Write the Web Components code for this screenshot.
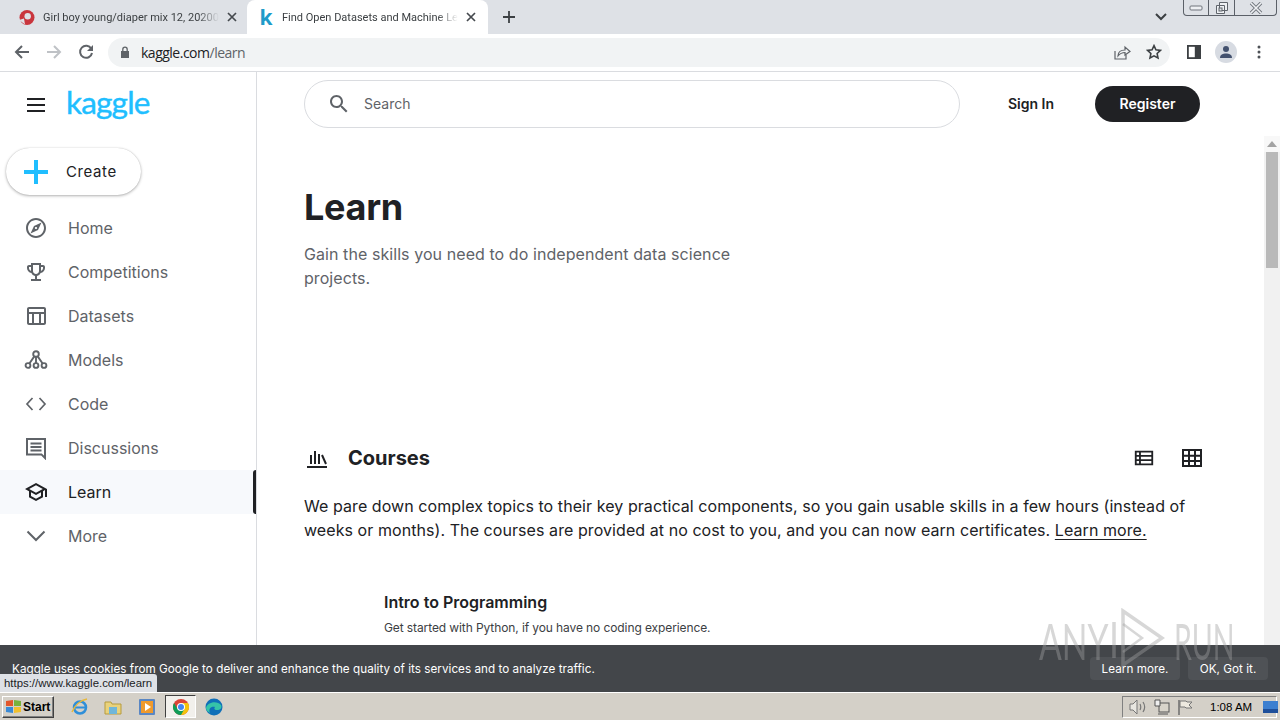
<!DOCTYPE html>
<html lang="en">
<head>
<meta charset="utf-8">
<title>Find Open Datasets and Machine Learning Projects | Kaggle</title>
<style>
    html, body { margin: 0; height: 100%; overflow: hidden; background: #fff; }
    body { display: flex; flex-direction: column; width: 1280px; height: 720px; position: relative; font-family: Inter, sans-serif; }
</style>
</head>
<body>
    <tab-strip></tab-strip>
    <address-bar></address-bar>
    <page-frame>
        <side-nav slot="nav">
            <nav-item label="Home" icon="home"></nav-item>
            <nav-item label="Competitions" icon="trophy"></nav-item>
            <nav-item label="Datasets" icon="table"></nav-item>
            <nav-item label="Models" icon="models"></nav-item>
            <nav-item label="Code" icon="code"></nav-item>
            <nav-item label="Discussions" icon="chat"></nav-item>
            <nav-item label="Learn" icon="school" active></nav-item>
            <nav-item label="More" icon="more"></nav-item>
        </side-nav>
        <top-search slot="top"></top-search>
        <learn-content slot="content"></learn-content>
    </page-frame>
    <task-bar></task-bar>
    <cookie-bar></cookie-bar>
    <status-tip>https://www.kaggle.com/learn</status-tip>
    <run-mark></run-mark>

<script>
const ICONS = {
    home: `<path d="M12 2C6.48 2 2 6.48 2 12s4.48 10 10 10 10-4.48 10-10S17.52 2 12 2zm0 18c-4.41 0-8-3.59-8-8s3.59-8 8-8 8 3.59 8 8-3.59 8-8 8zm-5.5-2.5l7.51-3.49L17.5 6.5 9.99 9.99 6.5 17.5zm5.5-6.6c.61 0 1.1.49 1.1 1.1s-.49 1.1-1.1 1.1-1.1-.49-1.1-1.1.49-1.1 1.1-1.1z"/>`,
    trophy: `<path d="M19 5h-2V3H7v2H5c-1.1 0-2 .9-2 2v1c0 2.55 1.92 4.63 4.39 4.94.63 1.5 1.98 2.63 3.61 2.96V19H7v2h10v-2h-4v-3.1c1.63-.33 2.98-1.46 3.61-2.96C19.08 12.63 21 10.55 21 8V7c0-1.1-.9-2-2-2zM5 8V7h2v3.82C5.84 10.4 5 9.3 5 8zm7 6c-1.65 0-3-1.35-3-3V5h6v6c0 1.65-1.35 3-3 3zm7-6c0 1.3-.84 2.4-2 2.82V7h2v1z"/>`,
    table: `<path d="M20 3H5C3.9 3 3 3.9 3 5v14c0 1.1.9 2 2 2h15c1.1 0 2-.9 2-2V5c0-1.1-.9-2-2-2zm0 2v3H5V5h15zm-5 14h-5v-9h5v9zM5 10h3v9H5v-9zm12 9v-9h3v9h-3z"/>`,
    models: `<g fill="none" stroke="currentColor" stroke-width="1.9"><circle cx="12" cy="6" r="2.8"/><circle cx="4" cy="17.500" r="2.400"/><circle cx="12" cy="17.500" r="2.400"/><circle cx="20" cy="17.500" r="2.400"/><path d="M12 9v6M10.300 8.400L5.400 15.500M13.700 8.400l4.900 7.100"/></g>`,
    code: `<path fill="none" stroke="currentColor" stroke-width="1.700" d="M8.500 6L3 12l5.500 6M15.500 6L21 12l-5.500 6"/>`,
    chat: `<path fill="none" stroke="currentColor" stroke-width="2" d="M3 3h18v19l-3.600-3.600H3z"/><path fill="none" stroke="currentColor" stroke-width="2" d="M6.500 7.500h11M6.500 11h11M6.500 14.500h11"/>`,
    school: `<path d="M12 3L1 9l4 2.18v6L12 21l7-3.82v-6l2-1.09V17h2V9L12 3zm6.82 6L12 12.72 5.18 9 12 5.28 18.82 9zM17 15.99l-5 2.73-5-2.73v-3.72L12 15l5-2.73v3.72z"/>`,
    more: `<path fill="none" stroke="currentColor" stroke-width="2" d="M3.500 7.500L12 16l8.500-8.500"/>`,
    search: `<path d="M15.500 14h-.79l-.28-.27C15.41 12.59 16 11.11 16 9.500 16 5.91 13.09 3 9.500 3S3 5.91 3 9.500 5.91 16 9.500 16c1.61 0 3.09-.59 4.230-1.570l.27.28v.79l5 4.990L20.490 19l-4.990-5zm-6 0C7.010 14 5 11.990 5 9.500S7.010 5 9.500 5 14 7.010 14 9.500 11.990 14 9.500 14z"/>`,
    courses: `<path fill="none" stroke="currentColor" stroke-width="2" d="M3 21h20M7 18V9M11 18V5M15 18V8M18 9l4 9"/>`,
    list: `<path d="M2 4h20v16H2zm2 2v2.600h2.600V6zm4.600 0v2.600H20V6zM4 10.700v2.600h2.600v-2.600zm4.600 0v2.600H20v-2.600zM4 15.400V18h2.600v-2.600zm4.600 0V18H20v-2.600z" fill-rule="evenodd"/>`,
    grid: `<path d="M2 3h20v18H2zm2 2v3.700h4V5zm6 0v3.700h4V5zm6 0v3.700h4V5zM4 10.700v3.300h4v-3.300zm6 0v3.300h4v-3.300zm6 0v3.300h4v-3.300zM4 16v3h4v-3zm6 0v3h4v-3zm6 0v3h4v-3z" fill-rule="evenodd"/>`
};

function icon(name, size) {
    return `<svg width="${size}" height="${size}" viewBox="0 0 24 24" fill="currentColor" aria-hidden="true">${ICONS[name]}</svg>`;
}

// every element below only needs a shadow root with fixed markup
class Shadowed extends HTMLElement {
    connectedCallback() {
        if (this.shadowRoot) return;
        this.attachShadow({ mode: "open" });
        this.shadowRoot.innerHTML = this.render();
    }
}

class BrowserTab extends Shadowed {
    render() {
        return `<style>
            :host { display: flex; align-items: center; height: 34px; width: 241px; box-sizing: border-box;
                padding: 0 10px 0 13px; gap: 8px; font: 11px Roboto, sans-serif; color: #3c4043; }
            :host([active]) { background: #fff; border-radius: 8px 8px 0 0; padding: 0 12px 0 11px; }
            .fav { flex: none; width: 16px; height: 16px; display: flex; align-items: center; justify-content: center; }
            .title { flex: 1; min-width: 0; white-space: nowrap; overflow: hidden;
                -webkit-mask-image: linear-gradient(to right, #000 88%, transparent); mask-image: linear-gradient(to right, #000 88%, transparent); }
            svg { display: block; flex: none; }
        </style>
        <span class="fav"><slot name="fav"></slot></span>
        <span class="title"><slot></slot></span>
        <svg width="10" height="10" viewBox="0 0 10 10"><path d="M1 1l8 8M9 1l-8 8" stroke="#45494e" stroke-width="1.700"/></svg>`;
    }
}
customElements.define("browser-tab", BrowserTab);

class TabStrip extends Shadowed {
    render() {
        return `<style>
            :host { display: flex; flex: none; height: 34px; background: #dee1e6; position: relative; box-sizing: border-box; align-items: flex-end; }
            .tabs { display: flex; padding-left: 6px; align-items: flex-end; }
            .k { color: #1f9bc9; font: 700 21px "Noto Sans", sans-serif; line-height: 16px; }
            .plus { margin-left: 14px; height: 34px; display: flex; align-items: center; }
            .chev { position: absolute; left: 1155px; top: 12px; }
            .win { position: absolute; left: 1183px; top: 0; width: 94px; height: 16px; display: flex; box-sizing: border-box;
                border: 1px solid #5b6068; border-top: 0; border-radius: 0 0 4px 4px; }
            .win span { display: flex; align-items: center; justify-content: center; border-right: 1px solid #5b6068; }
            .win span:last-child { border-right: 0; flex: 1; }
        </style>
        <div class="tabs">
            <browser-tab>
                <svg slot="fav" width="17" height="17" viewBox="0 0 16 16"><circle cx="8" cy="8" r="7.500" fill="#c9353d"/><circle cx="8.700" cy="6.800" r="3.200" fill="#dee1e6"/><path d="M0 10.500l5-1.500 1 6z" fill="#dee1e6"/></svg>
                Girl boy young/diaper mix 12, 20200
            </browser-tab>
            <browser-tab active>
                <span slot="fav" class="k">k</span>
                Find Open Datasets and Machine Learning
            </browser-tab>
            <span class="plus"><svg width="14" height="14" viewBox="0 0 14 14"><path d="M7 1v12M1 7h12" stroke="#3c4043" stroke-width="1.800"/></svg></span>
        </div>
        <svg class="chev" width="12" height="10" viewBox="0 0 12 10"><path d="M1 2l5 5 5-5" fill="none" stroke="#3c4043" stroke-width="2"/></svg>
        <div class="win">
            <span style="width:24px"><svg width="14" height="6" viewBox="0 0 14 6"><rect x="1" y="1" width="12" height="4" rx="1" fill="#eef0f3" stroke="#70757c"/></svg></span>
            <span style="width:25px"><svg width="14" height="14" viewBox="0 0 14 14"><path d="M4.500 1.500h8v8h-8zM1.500 4.500h8v8h-8z" fill="#eef0f3" stroke="#5f646b"/><rect x="4" y="7" width="3" height="3" fill="#dee1e6" stroke="#5f646b"/></svg></span>
            <span><svg width="14" height="12" viewBox="0 0 14 12"><path d="M2 1l10 10M12 1L2 11" stroke="#70757c" stroke-width="3.400"/><path d="M2 1l10 10M12 1L2 11" stroke="#eef0f3" stroke-width="1.600"/></svg></span>
        </div>`;
    }
}
customElements.define("tab-strip", TabStrip);

class AddressBar extends Shadowed {
    render() {
        return `<style>
            :host { display: flex; flex: none; align-items: center; height: 38px; box-sizing: border-box; background: #fff;
                border-bottom: 1px solid #dadce0; padding: 0 19px 1px 14px; }
            .nav { display: flex; gap: 16px; width: 94px; flex: none; align-items: center; }
            .url { flex: 1; height: 29px; background: #f1f3f4; border-radius: 15px; display: flex; align-items: center; padding: 0 8px 0 12px;
                font: 14px "Open Sans", sans-serif; letter-spacing: -.5px; color: #202124; gap: 11px; }
            .url b { font-weight: 400; color: #5f6368; }
            .grow { flex: 1; display: block; }
            .url svg { flex: none; }
            .actions { display: flex; align-items: center; margin-left: 15px; gap: 12px; flex: none; }
            .avatar { width: 22px; height: 22px; border-radius: 50%; background: #d7dbe2; display: flex; align-items: center; justify-content: center; }
        </style>
        <div class="nav">
            <svg width="16" height="16" viewBox="0 0 16 16"><path d="M15 8H2M8 2L2 8l6 6" fill="none" stroke="#5f6368" stroke-width="2"/></svg>
            <svg width="16" height="16" viewBox="0 0 16 16"><path d="M1 8h13M8 2l6 6-6 6" fill="none" stroke="#bfc2c6" stroke-width="2"/></svg>
            <svg width="16" height="16" viewBox="0 0 16 16"><path d="M13.300 4.800A6 6 0 1 0 14 9" fill="none" stroke="#5f6368" stroke-width="2"/><path d="M15 1v6H9z" fill="#5f6368"/></svg>
        </div>
        <div class="url">
            <svg width="10" height="12" viewBox="0 0 10 12"><path d="M1 5h8v7H1z" fill="#5f6368"/><path d="M2.800 5V3.400a2.200 2.200 0 0 1 4.400 0V5" fill="none" stroke="#5f6368" stroke-width="1.300"/></svg>
            <span>kaggle.com<b>/learn</b></span>
            <span class="grow"></span>
            <svg width="18" height="16" viewBox="0 0 18 16" style="margin-right:4px"><path d="M2 7v8h11v-4" fill="none" stroke="#5f6368" stroke-width="1.200"/><path d="M5 12c0-4 3-6 7-6V3l5 4.500L12 11V8.500C9 8.500 7 9.500 5 12z" fill="none" stroke="#5f6368" stroke-width="1.200"/></svg>
            <svg width="16" height="16" viewBox="0 0 24 24"><path d="M12 2.500l2.900 6.300 6.800.8-5 4.700 1.300 6.800-6-3.400-6 3.400 1.300-6.800-5-4.700 6.800-.8z" fill="none" stroke="#3c4043" stroke-width="2.400"/></svg>
        </div>
        <div class="actions">
            <svg width="14" height="14" viewBox="0 0 14 14" style="margin:0 2px 0 2px"><path d="M0 0h14v14H0z" fill="#3c4043"/><path d="M1.800 1.800h6v10.400h-6z" fill="#fff"/></svg>
            <span class="avatar"><svg width="14" height="14" viewBox="0 0 14 14"><circle cx="7" cy="4" r="3" fill="#43516e"/><path d="M1 13c0-3.500 3-4.500 6-4.500s6 1 6 4.500z" fill="#43516e"/></svg></span>
            <svg width="4" height="14" viewBox="0 0 4 14" style="margin-left:8px"><circle cx="2" cy="2" r="1.500" fill="#4d5156"/><circle cx="2" cy="7" r="1.500" fill="#4d5156"/><circle cx="2" cy="12" r="1.500" fill="#4d5156"/></svg>
        </div>`;
    }
}
customElements.define("address-bar", AddressBar);

class PageFrame extends Shadowed {
    render() {
        return `<style>
            :host { display: flex; flex: 1; min-height: 0; overflow: hidden; background: #fff; }
            .nav { width: 257px; flex: none; box-sizing: border-box; border-right: 1px solid #dadce0; }
            .main { flex: 1; min-width: 0; display: flex; flex-direction: column; }
            .body { flex: 1; min-height: 0; display: flex; }
            .content { flex: 1; min-width: 0; overflow: hidden; }
            .track { width: 16px; flex: none; background: #f1f1f1; display: flex; flex-direction: column; align-items: center; }
            .up { height: 16px; flex: none; display: flex; align-items: center; justify-content: center; background: #f8f8f8; align-self: stretch; }
            .thumb { width: 12px; height: 116px; background: #b9b9b9; }
        </style>
        <div class="nav"><slot name="nav"></slot></div>
        <div class="main">
            <slot name="top"></slot>
            <div class="body">
                <div class="content"><slot name="content"></slot></div>
                <div class="track">
                    <div class="up"><svg width="10" height="6" viewBox="0 0 10 6"><path d="M5 0l5 6H0z" fill="#a3a3a3"/></svg></div>
                    <div class="thumb"></div>
                </div>
            </div>
        </div>`;
    }
}
customElements.define("page-frame", PageFrame);

class SideNav extends Shadowed {
    render() {
        return `<style>
            :host { display: block; height: 100%; font-family: Inter, sans-serif; }
            .brand { display: flex; align-items: center; height: 66px; padding: 0 0 0 27px; gap: 21px; box-sizing: border-box; }
            .logo { font: 400 31.500px Lato, sans-serif; color: #20beff; -webkit-text-stroke: .4px #20beff; letter-spacing: -.8px; line-height: 40px; margin-top: -7px; }
            .create { display: flex; align-items: center; width: 135px; height: 47px; box-sizing: border-box; margin: 10px 0 11px 6px; padding-left: 17px; gap: 17px;
                border-radius: 24px; background: #fff; box-shadow: 0 1px 3px rgba(0,0,0,.3), 0 0 1px rgba(0,0,0,.2);
                font-size: 15px; letter-spacing: .6px; color: #202124; }
        </style>
        <div class="brand">
            <svg width="18" height="14" viewBox="0 0 18 14"><path d="M0 1h18M0 7h18M0 13h18" stroke="#202124" stroke-width="2"/></svg>
            <span class="logo">kaggle</span>
        </div>
        <div class="create">
            <svg width="26" height="26" viewBox="0 0 26 26"><path d="M13 1v24M1 13h24" stroke="#20beff" stroke-width="4"/></svg>
            <span>Create</span>
        </div>
        <slot></slot>`;
    }
}
customElements.define("side-nav", SideNav);

class NavItem extends Shadowed {
    render() {
        return `<style>
            :host { display: flex; align-items: center; height: 44px; padding-left: 24px; gap: 20px; position: relative; font-size: 16px; color: #5f6368; }
            :host([active]) { background: #f7f9fc; color: #202124; }
            :host([active])::after { content: ""; position: absolute; right: 0; top: 0; bottom: 0; width: 3px; background: #202124; border-radius: 3px 0 0 3px; }
            svg { display: block; flex: none; }
        </style>
        ${icon(this.getAttribute("icon"), 24)}
        <span>${this.getAttribute("label")}</span>`;
    }
}
customElements.define("nav-item", NavItem);

class TopSearch extends Shadowed {
    render() {
        return `<style>
            :host { display: flex; flex: none; box-sizing: border-box; align-items: flex-start; height: 64px; padding: 8px 80px 0 47px; font-family: Inter, sans-serif; }
            .box { width: 656px; height: 48px; box-sizing: border-box; border: 1px solid #dadce0; border-radius: 24px; display: flex; align-items: center; padding: 0 0 1px 22px; gap: 13px;
                font-size: 14px; color: #5f6368; flex: none; }
            svg { display: block; }
            .sign { margin-left: auto; font-size: 14px; font-weight: 600; color: #202124; height: 47px; display: flex; align-items: center; }
            .reg { margin-left: 41px; width: 105px; height: 36px; padding-bottom: 1px; box-sizing: border-box; margin-top: 6px; border-radius: 18px; background: #202124; color: #fff; font-size: 14px; font-weight: 600;
                display: flex; align-items: center; justify-content: center; }
        </style>
        <div class="box">${icon("search", 24)}<span>Search</span></div>
        <span class="sign">Sign In</span>
        <span class="reg">Register</span>`;
    }
}
customElements.define("top-search", TopSearch);

class LearnContent extends Shadowed {
    render() {
        return `<style>
            :host { display: block; padding: 49px 63px 0 47px; font-family: Inter, sans-serif; color: #202124; }
            h1 { margin: 0; font-size: 36px; line-height: 44px; font-weight: 700; letter-spacing: -.3px; }
            .lead { margin: 13px 0 0; width: 440px; font-size: 16px; line-height: 24px; letter-spacing: .07px; color: #5f6368; }
            .head { display: flex; align-items: center; margin-top: 152px; height: 32px; }
            h2 { margin: 0 0 0 20px; font-size: 20px; line-height: 32px; font-weight: 700; }
            .views { margin-left: auto; display: flex; align-items: center; gap: 25px; margin-right: -3px; }
            svg { display: block; flex: none; }
            p { margin: 20px 0 0; font-size: 16px; line-height: 24px; letter-spacing: .07px; }
            a { color: inherit; text-decoration: underline; text-underline-offset: 3px; }
            .course { padding: 0 0 0 80px; margin-top: 48px; }
            .course b { display: block; font-size: 16px; line-height: 24px; font-weight: 600; }
            .course span { display: block; margin-top: 6px; font-size: 12px; line-height: 16px; letter-spacing: -.1px; color: #3c4043; }
        </style>
        <h1>Learn</h1>
        <div class="lead">Gain the skills you need to do independent data science projects.</div>
        <div class="head">
            ${icon("courses", 24)}
            <h2>Courses</h2>
            <div class="views">${icon("list", 22)}${icon("grid", 24)}</div>
        </div>
        <p>We pare down complex topics to their key practical components, so you gain usable skills in a few hours (instead of weeks or months). The courses are provided at no cost to you, and you can now earn certificates. <a>Learn more.</a></p>
        <div class="course">
            <b>Intro to Programming</b>
            <span>Get started with Python, if you have no coding experience.</span>
        </div>`;
    }
}
customElements.define("learn-content", LearnContent);

class CookieBar extends Shadowed {
    render() {
        return `<style>
            :host { position: absolute; left: 0; top: 645px; width: 1280px; height: 47px; box-sizing: border-box; background: #43464a; color: #fff; display: flex;
                align-items: flex-end; padding: 0 12px 12px 12px; font: 11.700px Inter, sans-serif; letter-spacing: .03px; }
            .msg { flex: 1; line-height: 24px; margin-bottom: -1px; }
            .btn { height: 23px; display: flex; align-items: center; justify-content: center; border-radius: 4px; background: #4f5256; }
        </style>
        <span class="msg">Kaggle uses cookies from Google to deliver and enhance the quality of its services and to analyze traffic.</span>
        <span class="btn" style="width:90px;margin-right:8px">Learn more.</span>
        <span class="btn" style="width:80px">OK, Got it.</span>`;
    }
}
customElements.define("cookie-bar", CookieBar);

class StatusTip extends Shadowed {
    render() {
        return `<style>
            :host { position: absolute; left: 0; top: 674px; height: 18px; box-sizing: border-box; padding: 0 5px 0 4px; background: #dee1e6; border-radius: 0 3px 0 0;
                font: 11.400px/18px "Liberation Sans", sans-serif; color: #202124; white-space: nowrap; }
        </style><slot></slot>`;
    }
}
customElements.define("status-tip", StatusTip);

class TaskBar extends Shadowed {
    render() {
        return `<style>
            :host { display: flex; flex: none; align-items: center; height: 28px; box-sizing: border-box; background: #d4d0c8; border-top: 1px solid #fff; padding: 0 3px 0 2px; position: relative; }
            .start { display: flex; align-items: center; gap: 1px; width: 52px; height: 22px; box-sizing: border-box; padding-left: 2px; background: #d4d0c8;
                border: 1px solid; border-color: #fff #404040 #404040 #fff; box-shadow: inset -1px -1px #808080;
                font: 700 12px "Liberation Sans", sans-serif; color: #000; }
            .apps { display: flex; align-items: center; margin-left: 17px; gap: 15px; }
            .apps svg { display: block; }
            .on { width: 31px; height: 23px; display: flex; align-items: center; justify-content: center; margin: 0 -6px; box-sizing: border-box;
                border: 1px solid; border-color: #404040 #fff #fff #404040; background: #f2f0ec; }
            .tray { margin-left: auto; width: 155px; height: 22px; box-sizing: border-box; border: 1px solid; border-color: #808080 #fff #fff #808080; display: flex; align-items: center;
                padding-left: 6px; gap: 7px; font: 11.500px "Liberation Sans", sans-serif; color: #000; white-space: nowrap; }
            .tray svg { flex: none; }
            .clock { margin-left: 10px; }
        </style>
        <div class="start">
            <svg width="17" height="15" viewBox="0 0 17 15"><path d="M1 2l7-1v6H1z" fill="#e2562b"/><path d="M9 1l7 1v5H9z" fill="#77b23c"/><path d="M1 8h7v6l-7-1z" fill="#3a8ad6"/><path d="M9 8h7v5l-7 1z" fill="#f1c02e"/></svg>
            <span>Start</span>
        </div>
        <div class="apps">
            <svg width="18" height="18" viewBox="0 0 18 18"><ellipse cx="9" cy="9.500" rx="6" ry="6" fill="none" stroke="#2f8fd9" stroke-width="2.500"/><path d="M3 9.500h12" stroke="#2f8fd9" stroke-width="2"/><path d="M1 14C4 7 10 2 16 1" fill="none" stroke="#e8b93a" stroke-width="1.500"/></svg>
            <svg width="18" height="18" viewBox="0 0 18 18"><path d="M1 4h6l1 2h9v10H1z" fill="#e9d27c" stroke="#b69b3f"/><path d="M5 9h8v7H5z" fill="#6fb6d9"/></svg>
            <svg width="18" height="18" viewBox="0 0 18 18" style="margin-left:1px"><rect x="1" y="1" width="16" height="16" rx="1" fill="#5a87c4"/><rect x="3" y="3" width="12" height="12" fill="#ef9a2d"/><path d="M7 5l6 4-6 4z" fill="#fff"/></svg>
            <span class="on"><svg width="18" height="18" viewBox="0 0 18 18"><circle cx="9" cy="9" r="8" fill="#db4437"/><path d="M9 5h6.930A8 8 0 0 1 9 17z" fill="#f4c20d"/><path d="M2.070 5A8 8 0 0 0 9 17l3.460-6H5.540z" fill="#0f9d58"/><circle cx="9" cy="9" r="4" fill="#fff"/><circle cx="9" cy="9" r="3" fill="#4285f4"/></svg></span>
            <svg width="18" height="18" viewBox="0 0 18 18"><circle cx="9" cy="9" r="8.500" fill="#0f6fb8"/><path d="M1 10C2 4 12 2 16 7c1.500 3-1 5-4 5-3 0-3-2-2-3-4-1-7 2-5 6-2-1-4-3-4-5z" fill="#35c4a8"/></svg>
        </div>
        <div class="tray">
            <svg width="18" height="16" viewBox="0 0 18 16"><path d="M1 5h3l4-4v14l-4-4H1z" fill="#e8e6e0" stroke="#777"/><path d="M11 5c1 2 1 4 0 6M14 3c2 3 2 7 0 10" fill="none" stroke="#777" stroke-width="1.200"/></svg>
            <svg width="16" height="16" viewBox="0 0 16 16"><rect x="5" y="4" width="10" height="9" fill="#d8d4ca" stroke="#555"/><path d="M1 1h5v6H1z" fill="#eee" stroke="#555"/><path d="M4 15h10" stroke="#555"/></svg>
            <svg width="16" height="16" viewBox="0 0 16 16"><path d="M2 1v15" stroke="#666" stroke-width="1.400"/><path d="M3 2h6l1 1h5l-3 3 3 3H9L8 8H3z" fill="#eeeae0" stroke="#777"/></svg>
            <span class="clock">1:08 AM</span>
            <svg width="15" height="12" viewBox="0 0 15 12" style="margin-left:4px"><rect width="15" height="12" fill="#3c7fd0"/><path d="M0 8h15v4H0z" fill="#1e4f9a"/></svg>
        </div>`;
    }
}
customElements.define("task-bar", TaskBar);

// sandbox watermark, sits over everything at the bottom right
class RunMark extends Shadowed {
    render() {
        return `<style>
            :host { position: absolute; left: 1039px; top: 608px; display: flex; align-items: center; height: 60px; pointer-events: none;
                font: 400 51px/60px Lato, sans-serif; color: rgba(160,160,160,.42); white-space: nowrap; }
            span { display: block; transform-origin: left center; margin-top: 5px; }
            .any { width: 72px; transform: scaleX(.66); }
            .run { width: 60px; margin-left: 9px; transform: scaleX(.56); }
            svg { display: block; flex: none; }
        </style>
        <span class="any">ANY</span>
        <svg width="54" height="60" viewBox="0 0 54 60"><path d="M3 14v36M12 3l39 27-39 27z" fill="none" stroke="rgba(160,160,160,.42)" stroke-width="3.500"/><path d="M12 16l19 14-19 14" fill="none" stroke="rgba(160,160,160,.42)" stroke-width="2.500"/></svg>
        <span class="run">RUN</span>`;
    }
}
customElements.define("run-mark", RunMark);
</script>
</body>
</html>
